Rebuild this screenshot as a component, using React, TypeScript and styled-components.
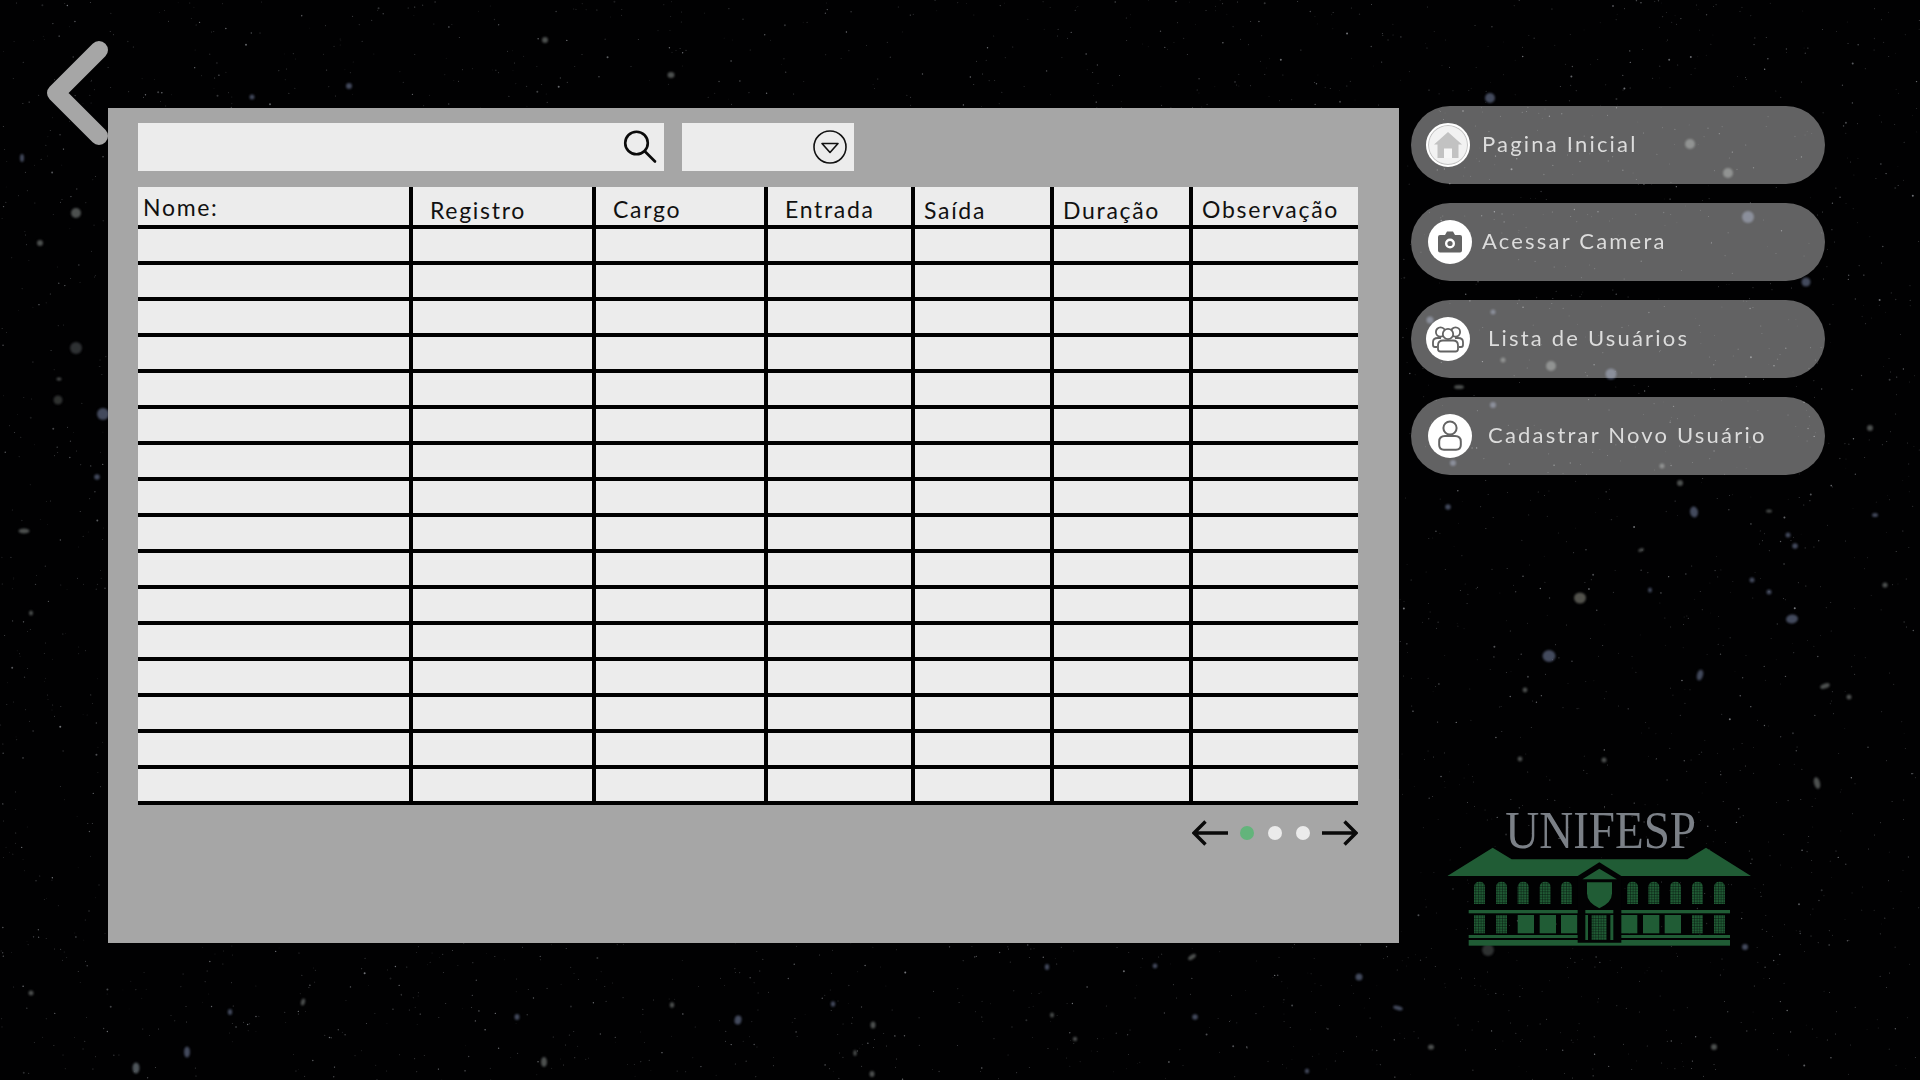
import React from "react";
import styled, { createGlobalStyle } from "styled-components";

const Global = createGlobalStyle`
  html, body { margin: 0; padding: 0; background: #000; }
  body { font-family: "Lato", "Open Sans", sans-serif; }
`;

const Page = styled.div`
  position: relative;
  width: 1920px;
  height: 1080px;
  overflow: hidden;
  background: #010102;
`;

const Sky = styled.svg`
  position: absolute;
  inset: 0;
`;

const Layout = styled.div`
  position: relative;
  display: grid;
  grid-template-columns: 108px 1291px 414px;
  align-items: start;
`;

const BackCol = styled.div`
  padding: 40px 0 0 40px;
`;

const BackIcon = styled.svg`
  display: block;
  width: 68px;
  height: 110px;
`;

const Panel = styled.main`
  margin-top: 108px;
  height: 835px;
  box-sizing: border-box;
  padding: 15px 41px 0 30px;
  background: #a6a6a6;
`;

const Toolbar = styled.div`
  display: flex;
  gap: 18px;
  height: 48px;
  margin-bottom: 16px;
`;

const Field = styled.div<{ $w: number; $pr: number }>`
  width: ${(p) => p.$w}px;
  box-sizing: border-box;
  padding-right: ${(p) => p.$pr}px;
  display: flex;
  align-items: center;
  justify-content: flex-end;
  background: #ececec;
`;

const Table = styled.div`
  display: grid;
  grid-template-columns: 275px 183px 172px 147px 139px 139px 165px;
  grid-auto-rows: 36px;
  grid-template-rows: 42px;
  background: #ececec;
`;

const Cell = styled.div<{ $last?: boolean }>`
  box-sizing: border-box;
  border-bottom: 4px solid #000;
  border-right: ${(p) => (p.$last ? "0" : "4px solid #000")};
`;

const HeadCell = styled(Cell)<{ $pl: number; $pb: number }>`
  display: flex;
  align-items: flex-end;
  padding-left: ${(p) => p.$pl}px;
  padding-bottom: ${(p) => p.$pb}px;
  font-size: 23px;
  line-height: 28px;
  letter-spacing: 1.7px;
  color: #111;
  white-space: nowrap;
`;

const Pager = styled.nav`
  display: flex;
  justify-content: flex-end;
  align-items: center;
  gap: 12px;
  margin-top: 15px;
  height: 26px;
  width: 1220px;
`;

const Dots = styled.div`
  display: flex;
  gap: 14px;
`;

const Dot = styled.span<{ $on?: boolean }>`
  width: 14px;
  height: 14px;
  border-radius: 50%;
  background: ${(p) => (p.$on ? "#63b47b" : "#ebebeb")};
`;

const Side = styled.aside`
  margin: 105.7px 0 0 12px;
  display: flex;
  flex-direction: column;
  gap: 19px;
`;

const Pill = styled.a<{ $il: number; $gap: number }>`
  display: flex;
  align-items: center;
  height: 78px;
  width: 414px;
  box-sizing: border-box;
  padding-left: ${(p) => p.$il}px;
  gap: ${(p) => p.$gap}px;
  border-radius: 39px;
  background: rgba(255, 255, 255, 0.385);
  color: #dcdcdc;
  font-size: 22px;
  letter-spacing: 2.2px;
`;

const PillText = styled.span`
  margin-top: -3px;
`;

const IconDisc = styled.span<{ $dim?: boolean }>`
  width: 44px;
  height: 44px;
  border-radius: 50%;
  flex: none;
  display: flex;
  align-items: center;
  justify-content: center;
  background: #fff;
  box-sizing: border-box;
  ${(p) => (p.$dim ? "background: #f2f2f2; border: 2px solid #fff; box-shadow: inset 0 0 0 1px #c4c4c4;" : "")}
`;

const LogoSvg = styled.svg`
  display: block;
  width: 340px;
  height: 170px;
  margin: 296px 0 0 19px;
`;

function rng(seed: number) {
  return () => {
    seed |= 0;
    seed = (seed + 0x6d2b79f5) | 0;
    let t = Math.imul(seed ^ (seed >>> 15), 1 | seed);
    t = (t + Math.imul(t ^ (t >>> 7), 61 | t)) ^ t;
    return ((t ^ (t >>> 14)) >>> 0) / 4294967296;
  };
}

// x, y, rx, ry, rotation, colour
type Big = [number, number, number, number, number, string];
const GREY = "#7d8280";
const BLUE = "#6d7896";
const big: Big[] = [
  [545, 40, 3, 3, 0, GREY], [671, 75, 3.5, 3, 0, GREY], [349, 86, 3, 3, 0, BLUE], [252, 97, 2.5, 2.5, 0, BLUE],
  [1490, 98, 5, 5, 0, BLUE], [1690, 144, 5, 5, 0, GREY], [1728, 173, 5, 5, 0, GREY], [1748, 217, 6, 6, 0, BLUE],
  [1806, 282, 4.5, 4.5, 0, BLUE], [1551, 366, 5, 5, 0, GREY], [1611, 374, 5.5, 5.5, 0, BLUE], [1493, 405, 3, 3, 0, BLUE],
  [1430, 320, 3.5, 3.5, 0, BLUE], [1493, 312, 2.5, 2.5, 0, BLUE], [1503, 360, 2.5, 2.5, 0, GREY], [1459, 387, 5, 2, 0, GREY],
  [1453, 463, 3, 3, 0, BLUE], [1662, 466, 2.5, 2.5, 0, GREY], [1680, 483, 3, 3, 0, GREY],
  [76, 213, 5, 5, 0, GREY], [40, 243, 3, 3, 0, GREY], [22, 158, 2, 4, 0, BLUE], [76, 348, 6, 6, 0, "#4c5052"], [58, 400, 4.5, 4.5, 0, "#4c4f4e"],
  [103, 414, 6, 6, 0, BLUE], [97, 477, 2.8, 2.8, 0, BLUE], [24, 531, 5.5, 2.5, 0, GREY], [59, 379, 2.6, 1.6, 0, GREY], [31, 613, 2, 2.5, 0, GREY],
  [1580, 598, 6, 5.5, 0, "#85857c"], [1549, 656, 6.5, 6, 0, BLUE], [1694, 512, 4, 5.5, -10, BLUE], [1792, 619, 6, 4.5, -10, BLUE],
  [1700, 675, 3, 5.5, 15, BLUE], [1817, 783, 3, 6, -15, GREY], [1825, 686, 5, 2.5, -20, GREY], [1849, 697, 2.5, 2.5, 0, GREY],
  [1795, 546, 2.8, 2.8, 0, BLUE], [1788, 535, 2.5, 2.5, 0, BLUE], [1769, 511, 3, 1.6, 0, GREY], [1752, 580, 2.5, 2.5, 0, BLUE], [1769, 592, 2.5, 2.5, 0, BLUE],
  [1650, 590, 2, 2.5, 0, BLUE], [1641, 550, 3, 1.6, -20, GREY], [1525, 690, 2.4, 2.4, 0, GREY], [1520, 759, 2.4, 2.4, 0, GREY], [1448, 507, 2.8, 2.8, 0, BLUE],
  [136, 1068, 3.5, 5.5, 0, "#7f8a92"], [187, 1052, 3, 5.5, 0, BLUE], [544, 1062, 3, 5, 0, GREY], [738, 1020, 3.5, 4.5, 10, BLUE],
  [873, 1025, 2.5, 3.5, 0, GREY], [517, 1017, 2.5, 3, 0, BLUE], [303, 1002, 2, 3.5, 15, GREY], [31, 993, 2.5, 2.5, 0, GREY],
  [672, 1005, 2.2, 2.8, 0, GREY], [833, 1004, 2.2, 2.8, 0, BLUE], [230, 1012, 2.2, 3, 0, BLUE], [872, 1074, 2.5, 3, 0, GREY], [855, 1053, 1.6, 3, 0, GREY],
  [1359, 977, 3.5, 3.5, 0, BLUE], [1192, 957, 4.5, 2.2, -35, GREY], [1047, 967, 2.2, 3, 0, BLUE], [1155, 966, 2.4, 2.4, 0, BLUE], [1195, 1017, 2.8, 2.8, 0, BLUE],
  [1431, 1047, 3, 2.6, 0, GREY], [1398, 1008, 5, 2, 15, BLUE], [1307, 1071, 2.2, 2.6, 0, BLUE], [1075, 1039, 2.2, 2.2, 0, GREY], [1052, 1015, 2, 2.6, 0, GREY],
  [1488, 950, 6, 6, 0, "#4c4f50"], [1745, 947, 3, 3, 0, BLUE], [1875, 515, 3, 2, 0, BLUE], [1870, 428, 3, 3, 0, GREY], [1714, 1047, 3, 3, 0, GREY],
  [1604, 760, 2.5, 2.5, 0, GREY], [1885, 585, 2.6, 2.6, 0, GREY],
];

const stars = (() => {
  const r = rng(7);
  const out: { x: number; y: number; s: number; o: number }[] = [];
  for (let i = 0; i < 5200; i++) {
    const d = r();
    out.push({
      x: r() * 1920,
      y: r() * 1080,
      s: d > 0.97 ? 1 : d > 0.72 ? 0.7 : 0.48,
      o: 0.12 + r() * 0.42,
    });
  }
  return out;
})();

const Stars = () => (
  <Sky width="1920" height="1080" viewBox="0 0 1920 1080">
    <defs>
      <filter id="soft" x="-50%" y="-50%" width="200%" height="200%">
        <feGaussianBlur stdDeviation="1" />
      </filter>
    </defs>
    {stars.map((s, i) => (
      <circle key={i} cx={s.x} cy={s.y} r={s.s} fill="#dfe3ea" opacity={s.o} />
    ))}
    <g filter="url(#soft)" opacity="0.62">
      {big.map(([x, y, rx, ry, rot, c], i) => (
        <ellipse key={i} cx={x} cy={y} rx={rx} ry={ry} fill={c} transform={`rotate(${rot} ${x} ${y})`} />
      ))}
    </g>
  </Sky>
);

const SearchIcon = () => (
  <svg width="34" height="34" viewBox="0 0 34 34" fill="none" stroke="#0a0a0a" strokeWidth="2.6" strokeLinecap="round">
    <circle cx="13.5" cy="13" r="11.3" />
    <path d="M22 21.5 L32 31.5" />
  </svg>
);

const DropIcon = () => (
  <svg width="34" height="34" viewBox="0 0 34 34" fill="none" stroke="#111" strokeWidth="1.6">
    <circle cx="17" cy="17" r="16" />
    <path d="M9 13.5 H25 L17 22.5 Z" strokeLinejoin="round" />
  </svg>
);

const HomeIcon = () => (
  <svg width="28" height="26" viewBox="0 0 28 26">
    <path fill="#c2c2c2" d="M14 0 L28 12.5 H24.5 V26 H3.5 V12.5 H0 Z" />
    <rect x="10" y="16.5" width="8" height="9.5" fill="#f6f6f6" />
  </svg>
);

const CameraIcon = () => (
  <svg width="26" height="24" viewBox="0 0 26 24">
    <path fill="#636363" d="M3 5 H8 L10 1.5 H16 L18 5 H23 Q25 5 25 7 V20.5 Q25 22.5 23 22.5 H3 Q1 22.5 1 20.5 V7 Q1 5 3 5 Z" />
    <circle cx="13" cy="13.5" r="5" fill="#fff" />
    <circle cx="13" cy="13.5" r="2.6" fill="#636363" />
  </svg>
);

const GroupIcon = () => (
  <svg width="32" height="28" viewBox="0 0 32 28" fill="none" stroke="#636363" strokeWidth="1.8">
    <circle cx="8.5" cy="7" r="4.6" />
    <circle cx="23.5" cy="7" r="4.6" />
    <path d="M5 22 H3 Q1 22 1 20 V17 Q1 13 6 13 H9" />
    <path d="M27 22 H29 Q31 22 31 20 V17 Q31 13 26 13 H23" />
    <circle cx="16" cy="9" r="5.2" fill="#fff" />
    <path fill="#fff" d="M6 24 V20.5 Q6 15.5 11 15.5 H21 Q26 15.5 26 20.5 V24 Q26 26.5 23.5 26.5 H8.5 Q6 26.5 6 24 Z" />
  </svg>
);

const PersonIcon = () => (
  <svg width="24" height="31" viewBox="0 0 24 31" fill="none" stroke="#636363" strokeWidth="2">
    <circle cx="12" cy="8" r="6.6" />
    <path d="M1.2 25 V21.5 Q1.2 16 7 16 H17 Q22.8 16 22.8 21.5 V25 Q22.8 29.7 18 29.7 H6 Q1.2 29.7 1.2 25 Z" />
  </svg>
);

const heads = [
  { t: "Nome:", pl: 5, pb: 4 },
  { t: "Registro", pl: 17, pb: 1 },
  { t: "Cargo", pl: 17, pb: 2 },
  { t: "Entrada", pl: 17, pb: 2 },
  { t: "Saída", pl: 9, pb: 1 },
  { t: "Duração", pl: 9, pb: 1 },
  { t: "Observação", pl: 9, pb: 2 },
];

const nav = [
  { t: "Pagina Inicial", il: 15, gap: 12, icon: <HomeIcon />, dim: true },
  { t: "Acessar Camera", il: 17, gap: 10, icon: <CameraIcon /> },
  { t: "Lista de Usuários", il: 15, gap: 18, icon: <GroupIcon /> },
  { t: "Cadastrar Novo Usuário", il: 17, gap: 16, icon: <PersonIcon /> },
];

const G = "#205c35";
const topWin = [132, 198, 263, 329, 393, 591, 655, 720, 786, 852];
const lowMesh = [132, 198, 786, 852];
const lowSolid = [263, 329, 393, 573, 639, 704];

const LogoArt = () => (
  <LogoSvg viewBox="0 0 1020 510">
    <defs>
      <pattern id="mesh" width="8" height="8" patternUnits="userSpaceOnUse">
        <rect width="8" height="8" fill={G} />
        <path d="M0 0 H8 M0 0 V8" stroke="#03100a" strokeWidth="2.4" />
      </pattern>
    </defs>
    <text x="512" y="175" textAnchor="middle" fontFamily="'Liberation Serif', serif" fontSize="156" textLength="572" lengthAdjust="spacingAndGlyphs" fill="#7b8087">
      UNIFESP
    </text>
    <path fill={G} d="M52 258 L188 173 L245 208 H772 L828 173 L963 258 Z" />
    {topWin.map((x) => (
      <path key={x} fill="url(#mesh)" d={`M${x} 342 V292 Q${x} 275 ${x + 16.5} 275 Q${x + 33} 275 ${x + 33} 292 V342 Z`} />
    ))}
    <rect x="116" y="360" width="784" height="10" fill={G} />
    <rect x="116" y="435" width="784" height="9" fill={G} />
    <rect x="116" y="450" width="784" height="17" fill={G} />
    {lowMesh.map((x) => (
      <rect key={x} x={x} y="375" width="33" height="55" fill="url(#mesh)" />
    ))}
    {lowSolid.map((x) => (
      <rect key={x} x={x} y="375" width="49" height="55" fill={G} />
    ))}
    <path fill="#020203" d="M443 258 L508 217 L574 258 V458 H443 Z" />
    <path fill={G} d="M457 268 L508 236 L561 268 Z" />
    <path fill={G} d="M471 277 H546 V310 Q546 338 508 355 Q471 338 471 310 Z" />
    <rect x="466" y="360" width="84" height="10" fill={G} />
    <rect x="466" y="375" width="8" height="75" fill={G} />
    <rect x="541" y="375" width="9" height="75" fill={G} />
    <rect x="485" y="375" width="45" height="75" fill="url(#mesh)" />
  </LogoSvg>
);

const ArrowLeft = () => (
  <svg width="36" height="26" viewBox="0 0 36 26" fill="none" stroke="#0a0a0a" strokeWidth="3.4">
    <path d="M36 13 H2 M13.5 1.5 L2 13 L13.5 24.5" />
  </svg>
);

const ArrowRight = () => (
  <svg width="36" height="26" viewBox="0 0 36 26" fill="none" stroke="#0a0a0a" strokeWidth="3.4">
    <path d="M0 13 H34 M22.5 1.5 L34 13 L22.5 24.5" />
  </svg>
);

export default function App() {
  return (
    <Page>
      <Global />
      <Stars />
      <Layout>
        <BackCol>
          <BackIcon viewBox="0 0 68 110" fill="none" stroke="#a6a6a6" strokeWidth="18" strokeLinecap="round" strokeLinejoin="round">
            <path d="M59 10 L16 53 L59 96" />
          </BackIcon>
        </BackCol>
        <Panel>
          <Toolbar>
            <Field $w={526} $pr={7}>
              <SearchIcon />
            </Field>
            <Field $w={172} $pr={7}>
              <DropIcon />
            </Field>
          </Toolbar>
          <Table>
            {heads.map((h, i) => (
              <HeadCell key={h.t} $pl={h.pl} $pb={h.pb} $last={i === 6}>
                {h.t}
              </HeadCell>
            ))}
            {Array.from({ length: 16 * 7 }, (_, i) => (
              <Cell key={i} $last={i % 7 === 6} />
            ))}
          </Table>
          <Pager>
            <ArrowLeft />
            <Dots>
              <Dot $on />
              <Dot />
              <Dot />
            </Dots>
            <ArrowRight />
          </Pager>
        </Panel>
        <Side>
          {nav.map((n) => (
            <Pill key={n.t} $il={n.il} $gap={n.gap}>
              <IconDisc $dim={n.dim}>{n.icon}</IconDisc>
              <PillText>{n.t}</PillText>
            </Pill>
          ))}
          <LogoArt />
        </Side>
      </Layout>
    </Page>
  );
}
